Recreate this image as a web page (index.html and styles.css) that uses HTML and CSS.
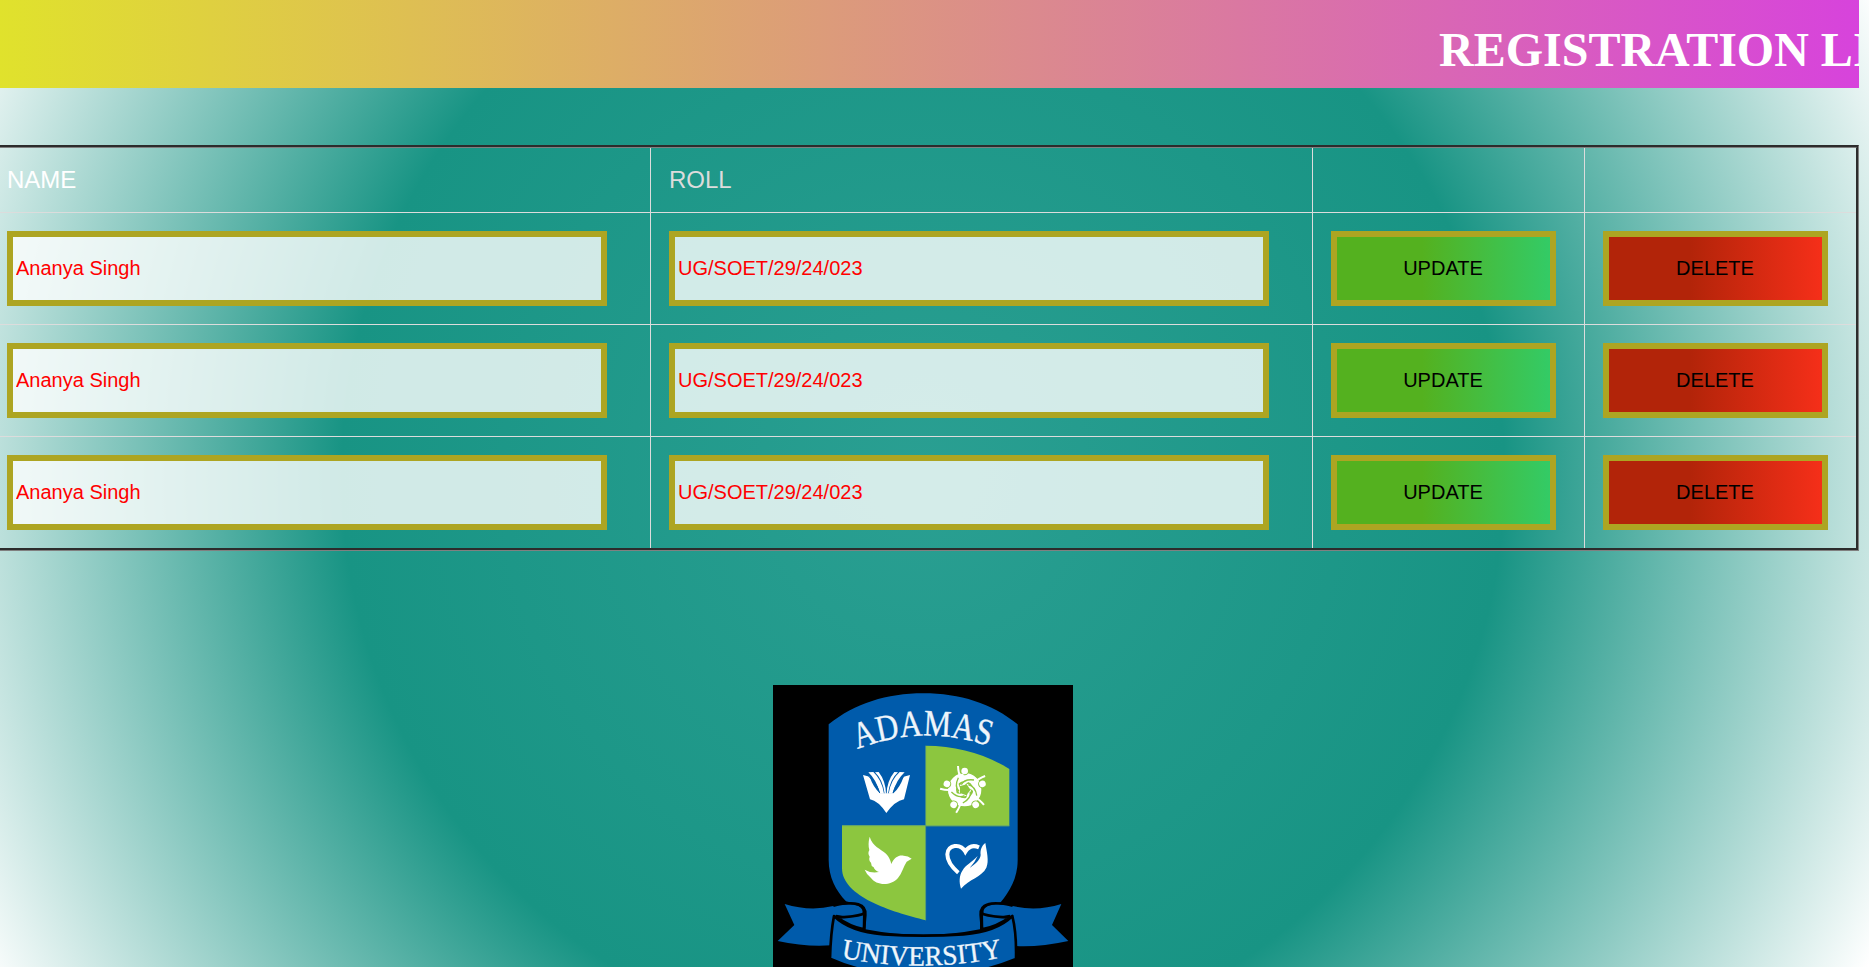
FILE: index.html
```
<!DOCTYPE html>
<html lang="en">
<head>
<meta charset="utf-8">
<title>Registration List</title>
<link rel="stylesheet" href="styles.css">
</head>
<body>
<div class="page">
  <header class="banner"><h1 class="banner-title">REGISTRATION LIST</h1></header>
  <table class="list">
    <colgroup><col class="col-first"><col class="col-text"><col class="col-action"><col class="col-last"></colgroup>
    <tr class="head"><td class="head-name">NAME</td><td>ROLL</td><td></td><td></td></tr>
    <tr>
      <td><input class="field" type="text" value="Ananya Singh"></td>
      <td><input class="field" type="text" value="UG/SOET/29/24/023"></td>
      <td><button class="btn update">UPDATE</button></td>
      <td><button class="btn delete">DELETE</button></td>
    </tr>
    <tr>
      <td><input class="field" type="text" value="Ananya Singh"></td>
      <td><input class="field" type="text" value="UG/SOET/29/24/023"></td>
      <td><button class="btn update">UPDATE</button></td>
      <td><button class="btn delete">DELETE</button></td>
    </tr>
    <tr>
      <td><input class="field" type="text" value="Ananya Singh"></td>
      <td><input class="field" type="text" value="UG/SOET/29/24/023"></td>
      <td><button class="btn update">UPDATE</button></td>
      <td><button class="btn delete">DELETE</button></td>
    </tr>
  </table>
  <svg class="logo" viewBox="39 45 900 900" role="img" aria-label="Adamas University">
    <defs>
      <path id="arc-top" d="M292 238Q490 160 698 232"/>
      <path id="arc-bottom" d="M243 863Q485 911 732 861"/>
    </defs>
    <rect x="39" y="45" width="900" height="900" fill="#000"/>
    <!-- shield -->
    <path fill="#005bab" d="M206 163C285 100 380 70 490 70S695 100 773 163V570C773 625 748 665 722 697L690 702Q664 706 662 728L660 778Q490 812 316 778L318 735Q314 706 290 702L258 694C228 662 206 622 206 570Z"/>
    <path fill="#8cc63f" d="M497 227C590 228 672 250 748 297V469H497Z"/>
    <path fill="#8cc63f" d="M246 466H497V751C395 726 246 680 246 595Z"/>
    <path d="M246 467H748M497 227V751" stroke="#5a9a78" stroke-width="2" fill="none"/>
    <!-- open book -->
    <g fill="#fff">
      <path d="M309 315L329 320Q340 352 360 370H400Q420 352 431 320L450 315L432 388Q405 393 379 429Q355 393 330 388Z"/>
      <path d="M325 307L340 306Q366 330 372 371L360 371Q350 330 325 307Z"/>
      <path d="M345 307L356 306Q377 333 378 371L374 371Q368 328 345 307Z"/>
      <path d="M434 307L419 306Q392 330 386 371L398 371Q408 330 434 307Z"/>
      <path d="M414 307L403 306Q381 333 380 371L384 371Q390 328 414 307Z"/>
    </g>
    <path d="M325 318Q352 342 359 369M433 318Q406 342 399 369" stroke="#005bab" stroke-width="3" fill="none"/>
    <!-- ring of people -->
    <circle cx="614" cy="359" r="38" fill="none" stroke="#fff" stroke-width="24"/>
    <g>
      <g id="person">
        <path d="M594 288Q595 310 602 322" fill="none" stroke="#fff" stroke-width="6"/>
        <path d="M630 317Q650 322 655 342" fill="none" stroke="#fff" stroke-width="5"/>
        <circle cx="614" cy="303" r="13" fill="#8cc63f"/>
        <circle cx="614" cy="303" r="10" fill="#fff"/>
        <path d="M598 349Q610 327 648 330Q624 333 615 344Z" fill="#fff"/>
        <path d="M604 344Q613 326 642 330" fill="none" stroke="#8cc63f" stroke-width="4"/>
      </g>
      <use href="#person" transform="rotate(72 614 359)"/>
      <use href="#person" transform="rotate(144 614 359)"/>
      <use href="#person" transform="rotate(216 614 359)"/>
      <use href="#person" transform="rotate(288 614 359)"/>
    </g>
    <!-- dove -->
    <path fill="#fff" d="M329 500C338 530 362 536 378 551Q390 563 394 582C402 561 418 554 431 557Q444 557 455 566L440 575C430 590 426 609 414 624C391 650 348 646 333 624Q320 614 314 599Q334 611 357 606Q344 602 341 592Q333 588 333 578Q325 570 329 560Q322 550 328 540Q323 524 329 500Z"/>
    <!-- heart held by a hand -->
    <path d="M595 608C570 587 562 572 562 553C563 523 602 519 616 545C627 527 641 525 657 532" fill="none" stroke="#fff" stroke-width="12"/>
    <path fill="#fff" d="M676 519C680 545 688 573 679 593C666 621 627 627 603 656C597 639 597 616 608 601C616 585 635 578 653 558Q645 577 629 594C645 583 661 570 662 555C660 541 665 527 676 519Z"/>
    <!-- ribbon tails -->
    <path fill="#005bab" d="M74 702Q150 725 220 708Q270 698 295 708Q312 717 306 732Q270 742 229 734Q218 742 214 826Q140 832 53 813L103 765Z"/>
    <path fill="#005bab" d="M904 702Q830 725 758 708Q708 698 684 708Q666 717 672 732Q708 742 749 734Q760 742 765 828Q838 832 925 813L876 765Z"/>
    <g fill="#005bab" stroke="#000" stroke-width="8" stroke-linejoin="round">
      <path d="M231 742Q275 742 313 731L312 778Q270 770 231 742Z"/>
      <path d="M749 742Q703 742 665 731L666 778Q710 770 749 742Z"/>
      <path d="M222 738Q270 785 370 793Q490 801 610 793Q710 785 757 738Q770 790 768 867Q640 920 490 920Q330 920 210 866Q212 790 222 738Z"/>
    </g>
    <path d="M220 707Q270 695 295 703Q318 710 316 735L312 780M758 707Q708 695 684 703Q660 710 662 735L666 780" fill="none" stroke="#000" stroke-width="8"/>
    <text class="logo-text name"><textPath href="#arc-top" textLength="404" lengthAdjust="spacingAndGlyphs">ADAMAS</textPath></text>
    <text class="logo-text kind"><textPath href="#arc-bottom" textLength="488" lengthAdjust="spacingAndGlyphs">UNIVERSITY</textPath></text>
  </svg>
</div>
</body>
</html>
```
FILE: styles.css
```
* { box-sizing: border-box; }
html { height: 100%; overflow: hidden; }
body {
  margin: 0;
  height: 967px;
  overflow: hidden;
  background: radial-gradient(circle 1065px at 923px 474px, #2a9f92 0%, #189484 54.6%, #fff 100%) no-repeat;
  font-family: "Liberation Sans", Arial, sans-serif;
}
.page { width: 1859px; height: 967px; overflow: hidden; }
.banner {
  height: 88px;
  padding: 22px 0 0 1439px;
  overflow: hidden;
  background: linear-gradient(90deg, #e0e22c, #d743dc);
}
.banner-title {
  margin: 0;
  font: bold 48px/55px "Liberation Serif", "Times New Roman", serif;
  color: #fff;
  white-space: nowrap;
}
.list {
  width: 1873px;
  margin: 57px 0 0 -14px;
  table-layout: fixed;
  border-collapse: separate;
  border-spacing: 0;
  border: 3px groove #808080;
}
.col-first, .col-text { width: 662px; }
.col-action { width: 272px; }
.list td {
  height: 112px;
  padding: 18px 0 18px 18px;
  border: solid #dcdcdc;
  border-width: 0 1px 1px 0;
  vertical-align: top;
}
.list td:last-child { border-right: 0; }
.list tr:last-child td { height: 111px; border-bottom: 0; }
.list .head td { height: 65px; font-size: 24px; line-height: 28px; color: #dcdcdc; }
.list .head .head-name { color: #fff; }
.field, .btn {
  display: block;
  height: 75px;
  margin: 0;
  border: 6px solid #ada522;
  border-radius: 0;
  font: 20px "Liberation Sans", Arial, sans-serif;
}
.field { width: 600px; padding: 1px 3px; background: rgba(255, 255, 255, .8); background-clip: padding-box; color: #f00; }
.btn { width: 225px; padding: 0 1px 0 0; color: #000; }
.update { background: linear-gradient(90deg, #54b11f 40%, #33cb66) padding-box; }
.delete { background: linear-gradient(90deg, #b22409 38%, #f52f19) padding-box; }
.logo { display: block; width: 300px; height: 300px; margin: 134px 0 0 773px; }
.logo-text { font-family: "Liberation Serif", "Times New Roman", serif; fill: #eef5fb; stroke: #eef5fb; stroke-width: 1; }
.name { font-size: 112px; }
.kind { font-size: 84px; }
```
